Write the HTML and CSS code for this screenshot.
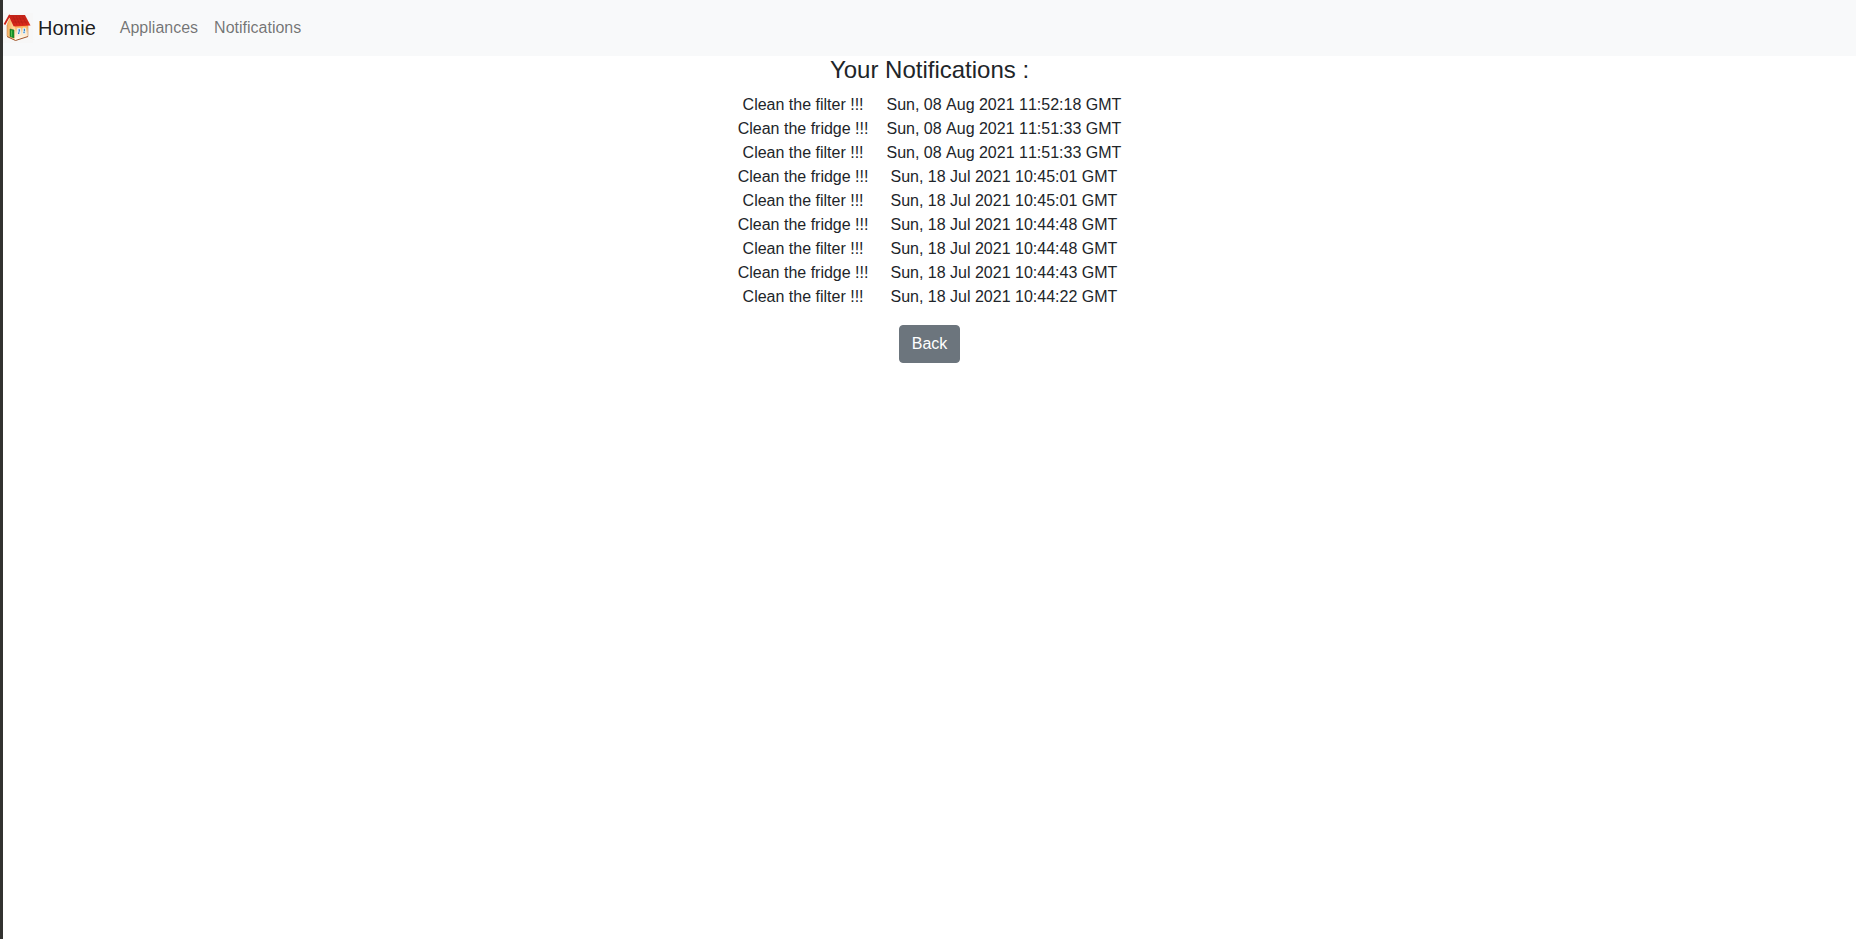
FILE: index.html
```html
<!DOCTYPE html>
<html lang="en">
<head>
<meta charset="utf-8">
<meta name="viewport" content="width=device-width, initial-scale=1">
<title>Homie</title>
<link rel="stylesheet" href="styles.css">
</head>
<body>
<nav class="navbar">
  <a class="brand" href="#">
    <svg class="logo" viewBox="0 0 30 30" aria-hidden="true">
      <defs>
        <linearGradient id="front" x1="0" y1="0" x2="1" y2="0.3">
          <stop offset="0" stop-color="#f5a04c"/>
          <stop offset="1" stop-color="#ffe7b0"/>
        </linearGradient>
        <linearGradient id="side" x1="0" y1="0" x2="0" y2="1">
          <stop offset="0" stop-color="#f8a545"/>
          <stop offset="0.5" stop-color="#fde3bd"/>
          <stop offset="1" stop-color="#ffffff"/>
        </linearGradient>
        <linearGradient id="roof" x1="0" y1="0" x2="0.2" y2="1">
          <stop offset="0" stop-color="#c0241a"/>
          <stop offset="1" stop-color="#dc2a1c"/>
        </linearGradient>
      </defs>
      <rect width="30" height="30" fill="#f7f7f7"/>
      <path d="M4 11 6.500 5l5.500 8 .5 14.500L4 23.500z" fill="url(#front)"/>
      <path d="M11.500 12H25v11.500l-12.500 4z" fill="url(#side)"/>
      <path d="M4 23.500l8.500 4 12.500-4" fill="none" stroke="#a0552b" stroke-width="1"/>
      <path d="M25 13v10.500M4 12v11" stroke="#c98a60" stroke-width="0.600"/>
      <path d="M6.500 2H22l5.500 10.500L11.500 13.500z" fill="url(#roof)"/>
      <path d="M1.500 11.500 6.500 2.500l5 10.500" fill="none" stroke="#cf2418" stroke-width="1.800" stroke-linejoin="round"/>
      <path d="M10 3l4 9M13 3l4 9M16 3l4 9M19 3l5 9M9 6h14M10 9h15" stroke="#a81a11" stroke-width="0.400"/>
      <path d="M7 16l4 1v8l-4-1.500z" fill="#14962b" stroke="#145e1b" stroke-width="0.500"/>
      <path d="M8.500 17.500v6" stroke="#4fc150" stroke-width="1"/>
      <path d="M14.500 15.500h3V21l-3 .5zM20 15h2.500v5.500L20 21z" fill="#9acbf0" stroke="#fff" stroke-width="0.600"/>
      <path d="M16.500 16.500v2M15.500 19.500v1.500M21.500 16v2M21 19v1" stroke="#3178b8" stroke-width="0.900"/>
    </svg>
    Homie
  </a>
  <a class="nav-link" href="#">Appliances</a>
  <a class="nav-link" href="#">Notifications</a>
</nav>
<main class="content">
  <h1 class="title">Your Notifications :</h1>
  <table class="notifications">
    <tbody>
      <tr><td>Clean the filter !!!</td><td>Sun, 08 Aug 2021 11:52:18 GMT</td></tr>
      <tr><td>Clean the fridge !!!</td><td>Sun, 08 Aug 2021 11:51:33 GMT</td></tr>
      <tr><td>Clean the filter !!!</td><td>Sun, 08 Aug 2021 11:51:33 GMT</td></tr>
      <tr><td>Clean the fridge !!!</td><td>Sun, 18 Jul 2021 10:45:01 GMT</td></tr>
      <tr><td>Clean the filter !!!</td><td>Sun, 18 Jul 2021 10:45:01 GMT</td></tr>
      <tr><td>Clean the fridge !!!</td><td>Sun, 18 Jul 2021 10:44:48 GMT</td></tr>
      <tr><td>Clean the filter !!!</td><td>Sun, 18 Jul 2021 10:44:48 GMT</td></tr>
      <tr><td>Clean the fridge !!!</td><td>Sun, 18 Jul 2021 10:44:43 GMT</td></tr>
      <tr><td>Clean the filter !!!</td><td>Sun, 18 Jul 2021 10:44:22 GMT</td></tr>
    </tbody>
  </table>
  <button class="back" type="button">Back</button>
</main>
</body>
</html>
```

FILE: styles.css
```css
* {
  box-sizing: border-box;
}

body {
  margin: 0;
  min-height: 100vh;
  border-left: 3px solid #323230;
  background: #fff;
  color: #212529;
  font: 16px/24px "Liberation Sans", Arial, sans-serif;
}

.navbar {
  display: flex;
  align-items: center;
  padding: 8px 0;
  background: #f8f9fa;
}

.brand {
  display: flex;
  align-items: center;
  gap: 5px;
  margin-right: 16px;
  color: rgba(0, 0, 0, 0.9);
  font-size: 20px;
  text-decoration: none;
}

.logo {
  width: 30px;
  height: 30px;
}

.nav-link {
  padding: 8px;
  color: rgba(0, 0, 0, 0.55);
  text-decoration: none;
}

.content {
  display: flex;
  flex-direction: column;
  align-items: center;
}

.title {
  margin: 0 0 10px;
  font-size: 24px;
  font-weight: 500;
  line-height: 27px;
}

.notifications {
  border-collapse: collapse;
  margin-bottom: 16px;
  font-kerning: none;
  text-align: center;
}

.notifications td {
  padding: 0;
}

.notifications td + td {
  padding-left: 18px;
}

.back {
  padding: 6px 12px;
  border: 1px solid #6c757d;
  border-radius: 4px;
  background: #6c757d;
  color: #fff;
  font: inherit;
}
```
